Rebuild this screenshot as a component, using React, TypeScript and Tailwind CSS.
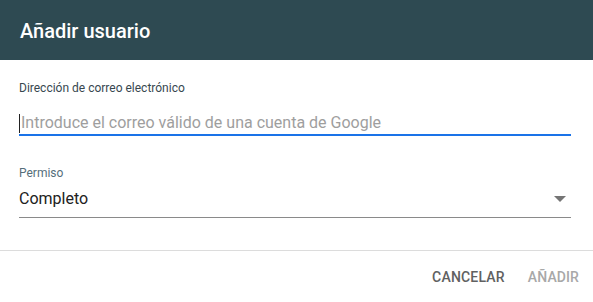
import React from 'react';

const App: React.FC = () => {
  return (
    <div className="w-[593px] h-[302px] bg-white flex flex-col font-['Roboto',sans-serif] overflow-hidden">
      <div className="h-[60px] bg-[#2e4a52] flex items-center px-5">
        <h1 className="text-[20px] font-medium text-white leading-none pt-[1px]">Añadir usuario</h1>
      </div>

      <div className="flex flex-col px-[19px] pr-[22px] pt-[22px]">
        <label className="text-[12px] text-[#37474f] leading-none h-[12px]">Dirección de correo electrónico</label>
        <div className="mt-[18px] flex items-center h-[24px] border-b-2 border-[#1a73e8]">
          <span className="w-[1px] h-[19px] bg-[#222] mr-[1px]"></span>
          <span className="text-[16px] text-[#9e9e9e] leading-none">Introduce el correo válido de una cuenta de Google</span>
        </div>

        <label className="mt-[31px] text-[12px] text-[#546e7a] leading-[12px] h-[12px]">Permiso</label>
        <div className="mt-[10px] flex items-center justify-between h-[20px]">
          <span className="text-[16px] text-[#212121] leading-[20px]">Completo</span>
          <svg width="12" height="6" viewBox="0 0 12 6" className="mr-[5px]">
            <path d="M0 0 L12 0 L6 6 Z" fill="#757575" />
          </svg>
        </div>
        <div className="mt-[8px] border-b border-[#8a8a8a]"></div>
      </div>

      <div className="mt-[32px] border-t border-[#dcdcdc]"></div>

      <div className="flex justify-end items-center gap-[23px] pr-[14px] pt-[16px]">
        <button className="text-[14px] font-medium text-[#616161] tracking-[0.2px]">CANCELAR</button>
        <button className="text-[14px] font-medium text-[#a8a8a8] tracking-[0.1px]">AÑADIR</button>
      </div>
    </div>
  );
};

export default App;
